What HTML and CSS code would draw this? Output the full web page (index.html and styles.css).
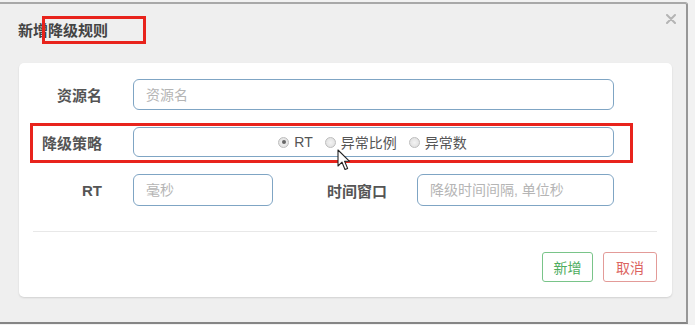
FILE: index.html
```html
<!DOCTYPE html>
<html lang="zh">
<head>
<meta charset="utf-8">
<link rel="stylesheet" href="styles.css">
</head>
<body>
<div class="modal">
  <div class="modal-header">
    <div class="title">新增降级规则</div>
    <svg class="close" width="10" height="10" viewBox="0 0 10 10"><path d="M1 1L9 9M9 1L1 9" stroke="#b4b4b4" stroke-width="2" stroke-linecap="round"/></svg>
  </div>
  <div class="panel">
    <div class="row">
      <label class="lbl">资源名</label>
      <input class="field wide" type="text" placeholder="资源名">
    </div>
    <div class="row row-mid">
      <label class="lbl">降级策略</label>
      <div class="field wide radios">
        <label class="opt"><input type="radio" name="s" checked><span>RT</span></label>
        <label class="opt"><input type="radio" name="s"><span>异常比例</span></label>
        <label class="opt"><input type="radio" name="s"><span>异常数</span></label>
      </div>
    </div>
    <div class="row row-last">
      <label class="lbl">RT</label>
      <input class="field short" type="text" placeholder="毫秒">
      <label class="lbl lbl2">时间窗口</label>
      <input class="field win" type="text" placeholder="降级时间间隔, 单位秒">
    </div>
    <div class="divider"></div>
    <div class="actions">
      <button class="btn btn-ok">新增</button>
      <button class="btn btn-cancel">取消</button>
    </div>
  </div>
</div>
<div class="mark mark-title"></div>
<div class="mark mark-row"></div>
<svg class="cursor" width="14" height="22" viewBox="0 0 14 22"><path d="M1 1L1 17L5 13.2L8 20.5L10.6 19.4L7.6 12.3L12.6 12.3Z" fill="#fff" stroke="#222" stroke-width="1.1" stroke-linejoin="round"/></svg>
</body>
</html>
```
FILE: styles.css
```css
* { box-sizing: border-box; }
html, body { margin: 0; padding: 0; }
body {
  width: 695px;
  height: 325px;
  background: #f2f2f2;
  position: relative;
  overflow: hidden;
  font-family: "Liberation Sans", "Noto Sans CJK SC", sans-serif;
  color: #555;
}
.modal {
  margin-top: 2px;
  width: 688px;
  height: 322px;
  background: #efefef;
  border-top: 2px solid #a8a8a8;
  border-right: 2px solid #979797;
  border-bottom: 2px solid #858585;
  border-top-right-radius: 3px;
}
.modal-header {
  height: 59px;
  display: flex;
  align-items: flex-start;
}
.title {
  margin: 17px 0 0 18px;
  font-size: 15px;
  line-height: 20px;
  font-weight: bold;
  color: #444;
}
.close {
  margin: 10px 10px 0 auto;
}
.panel {
  margin-left: 19px;
  width: 653px;
  height: 234px;
  background: #fff;
  border-radius: 5px;
  box-shadow: 0 1px 2px rgba(0,0,0,0.13);
  padding: 16px 15px 0 14px;
}
.row {
  display: flex;
  align-items: center;
  height: 31px;
  margin-bottom: 17px;
}
.row-mid { height: 30px; }
.row-last { height: 32px; margin-bottom: 25px; }
.lbl {
  width: 69px;
  margin-right: 31px;
  text-align: right;
  font-size: 15px;
  font-weight: bold;
  color: #555;
  white-space: nowrap;
}
.lbl2 { width: 114px; margin-right: 30px; }
.field {
  height: 100%;
  border: 1px solid #7fa5c4;
  border-radius: 6px;
  background: #fff;
  font-family: inherit;
  font-size: 14px;
  color: #555;
  padding: 0 12px;
  outline: none;
}
.field::placeholder { color: #b5b5b5; }
.wide { width: 481px; }
.short { width: 140px; }
.win { width: 197px; }
.radios {
  display: flex;
  align-items: center;
  justify-content: center;
  padding-left: 10px;
}
.opt {
  display: flex;
  align-items: center;
  font-size: 14px;
  color: #555;
  margin-right: 12px;
}
.opt:last-child { margin-right: 0; }
.opt input {
  appearance: none;
  -webkit-appearance: none;
  width: 11px;
  height: 11px;
  margin: 0 5px 0 0;
  border: 1px solid #bdbdbd;
  border-radius: 50%;
  background: radial-gradient(circle, #f3f3f3 0, #dcdcdc 100%);
  position: relative;
}
.opt input:checked::after {
  content: "";
  position: absolute;
  left: 2.5px;
  top: 2.5px;
  width: 4px;
  height: 4px;
  border-radius: 50%;
  background: #666;
}
.divider {
  height: 1px;
  background: #e8e8e8;
  margin-bottom: 20px;
}
.actions {
  display: flex;
  justify-content: flex-end;
  gap: 10px;
}
.btn {
  height: 30px;
  padding: 0;
  background: #fff;
  border-radius: 3px;
  font-family: inherit;
  font-size: 14px;
  white-space: nowrap;
  text-align: center;
}
.btn-ok { border: 1px solid #79c489; color: #4fad5f; width: 51px; }
.btn-cancel { border: 1px solid #e39b98; color: #dc6460; width: 54px; }
.mark {
  position: absolute;
  border: 3px solid #e8231c;
}
.mark-title { left: 42px; top: 16px; width: 104px; height: 28px; }
.mark-row { left: 30px; top: 123px; width: 603px; height: 40px; }
.cursor {
  position: absolute;
  left: 337px;
  top: 149px;
}
```
